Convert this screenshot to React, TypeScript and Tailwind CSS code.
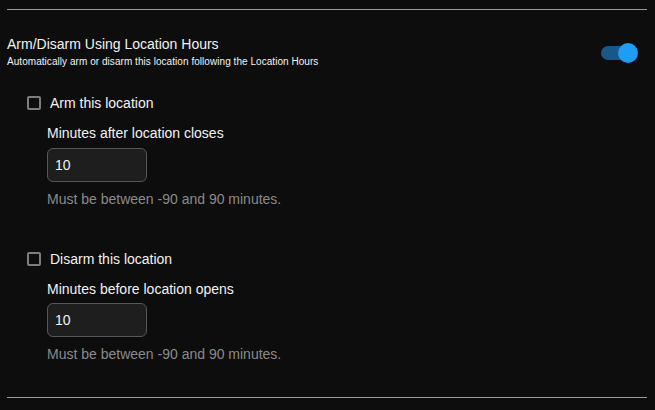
import React from "react";

function Checkbox() {
  return <div className="w-[14px] h-[14px] border-2 border-[#7d7d7d] rounded-[2px] shrink-0" />;
}

export default function App() {
  return (
    <div
      className="w-[655px] h-[410px] bg-[#0d0d0d] text-[#f2f2f2] pt-[9px] pl-[7px] pr-[8px] overflow-hidden"
      style={{ fontFamily: '"Liberation Sans", Arial, sans-serif' }}
    >
      <div className="border-t border-[#9a9a9a]" />
      <div className="flex justify-between items-start mt-[26px]">
        <div>
          <div className="text-[14px] leading-[16px]">Arm/Disarm Using Location Hours</div>
          <div className="text-[10px] leading-[12px] mt-[4px] tracking-[0.05px]">
            Automatically arm or disarm this location following the Location Hours
          </div>
        </div>
        <div className="relative w-[37px] h-[20px] mt-[7px] mr-[9px]">
          <div className="absolute left-0 top-[3px] w-[31px] h-[14px] rounded-full bg-[#17588a]" />
          <div className="absolute right-0 top-0 w-[20px] h-[20px] rounded-full bg-[#1f9cf5]" />
        </div>
      </div>

      <div className="pl-[20px]">
        <div className="flex items-center gap-[9px] mt-[27px] h-[16px]">
          <Checkbox />
          <span className="text-[14px] leading-[16px]">Arm this location</span>
        </div>
        <div className="pl-[20px]">
          <div className="text-[14px] leading-[16px] mt-[14px]">Minutes after location closes</div>
          <div className="mt-[7px] w-[100px] h-[34px] rounded-[6px] border border-[#575757] bg-[#1e1e1e] px-[7px] flex items-center text-[14px]">
            10
          </div>
          <div className="text-[14px] leading-[16px] mt-[9px] text-[#8a8a8a]">
            Must be between -90 and 90 minutes.
          </div>
        </div>

        <div className="flex items-center gap-[9px] mt-[44px] h-[16px]">
          <Checkbox />
          <span className="text-[14px] leading-[16px]">Disarm this location</span>
        </div>
        <div className="pl-[20px]">
          <div className="text-[14px] leading-[16px] mt-[14px]">Minutes before location opens</div>
          <div className="mt-[6px] w-[100px] h-[34px] rounded-[6px] border border-[#575757] bg-[#1e1e1e] px-[7px] flex items-center text-[14px]">
            10
          </div>
          <div className="text-[14px] leading-[16px] mt-[9px] text-[#8a8a8a]">
            Must be between -90 and 90 minutes.
          </div>
        </div>
      </div>

      <div className="border-t border-[#9a9a9a] mt-[35px]" />
    </div>
  );
}
